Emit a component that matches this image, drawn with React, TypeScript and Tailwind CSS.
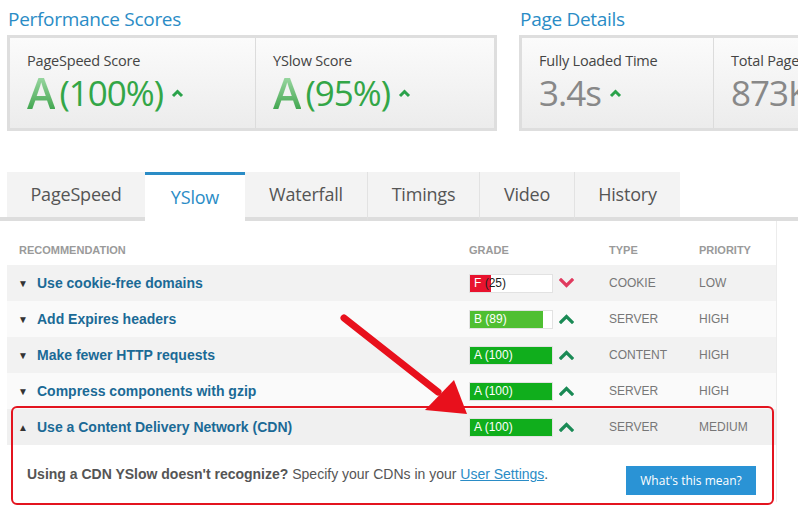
import React from "react";

const rows = [
  { name: "Use cookie-free domains", grade: "F", score: 25, type: "COOKIE", priority: "LOW", bg: "bg-[#f2f2f2]", open: false },
  { name: "Add Expires headers", grade: "B", score: 89, type: "SERVER", priority: "HIGH", bg: "bg-[#fafafa]", open: false },
  { name: "Make fewer HTTP requests", grade: "A", score: 100, type: "CONTENT", priority: "HIGH", bg: "bg-[#f2f2f2]", open: false },
  { name: "Compress components with gzip", grade: "A", score: 100, type: "SERVER", priority: "HIGH", bg: "bg-[#fafafa]", open: false },
  { name: "Use a Content Delivery Network (CDN)", grade: "A", score: 100, type: "SERVER", priority: "MEDIUM", bg: "bg-[#f0f0f0]", open: true },
];

const tabs = ["PageSpeed", "YSlow", "Waterfall", "Timings", "Video", "History"];
const tabWidths = ["w-[138px]", "w-[100px]", "w-[122px]", "w-[112px]", "w-[95px]", "w-[106px]"];

function Caret({ down = false, color }: { down?: boolean; color: string }) {
  return (
    <svg width="15" height="10" viewBox="0 0 15 10">
      <polyline
        points={down ? "2,2 7.5,7.5 13,2" : "2,8 7.5,2.5 13,8"}
        fill="none"
        stroke={color}
        strokeWidth="3.2"
        strokeLinecap="square"
      />
    </svg>
  );
}

function SmallCaret() {
  return (
    <svg width="13" height="9" viewBox="0 0 13 9" className="ml-[8px]">
      <polyline points="2,7 6.5,2.5 11,7" fill="none" stroke="#2aa24a" strokeWidth="3" />
    </svg>
  );
}

function GradeBar({ grade, score }: { grade: string; score: number }) {
  const fill = grade === "F" ? "#e8122e" : grade === "B" ? "#4fbf32" : "#10ae1c";
  return (
    <div className="relative h-[19px] w-[84px] border border-[#e2e2e2] bg-white">
      <div className="absolute left-0 top-0 h-full" style={{ width: `${score}%`, background: fill }} />
      <div className="relative pl-[4px] text-[12px] leading-[17px]">
        <span className="text-white">{grade}</span>{" "}
        <span className={grade === "F" ? "text-[#222]" : "text-white"}>({score})</span>
      </div>
    </div>
  );
}

function ScoreCell({ label, children, divider }: { label: string; children: React.ReactNode; divider?: boolean }) {
  return (
    <div className={`flex flex-col pl-[17px] pt-[12px] ${divider ? "border-l border-[#dcdcdc]" : ""}`}>
      <div className="text-[14.5px] leading-[22px] tracking-[-0.2px] text-[#444]">{label}</div>
      <div className="flex h-[42px] items-center">{children}</div>
    </div>
  );
}

export default function App() {
  return (
    <div className="relative h-[516px] w-[798px] overflow-hidden bg-white" style={{ fontFamily: "'Open Sans', sans-serif" }}>
      {/* top cards */}
      <div className="flex gap-[22px] pl-[7px] pt-[6px]">
        <div className="w-[490px] shrink-0">
          <h2 className="pl-[1px] text-[19px] leading-[26px] tracking-[-0.3px] text-[#2a8cc6]">Performance Scores</h2>
          <div className="mt-[3px] grid h-[96px] grid-cols-[245px_1fr] border-[3px] border-[#dedede] bg-gradient-to-b from-[#fbfbfb] to-[#ececec]">
            <ScoreCell label="PageSpeed Score">
              <span className="bg-gradient-to-b from-[#a6dfae] to-[#2f9f43] bg-clip-text text-[43px] leading-[42px] font-semibold text-transparent">A</span>
              <span className="ml-[4px] text-[35px] leading-[42px] tracking-[-1px] text-[#33a647]">(100%)</span>
              <SmallCaret />
            </ScoreCell>
            <ScoreCell label="YSlow Score" divider>
              <span className="bg-gradient-to-b from-[#a6dfae] to-[#2f9f43] bg-clip-text text-[43px] leading-[42px] font-semibold text-transparent">A</span>
              <span className="ml-[4px] text-[35px] leading-[42px] tracking-[-1px] text-[#33a647]">(95%)</span>
              <SmallCaret />
            </ScoreCell>
          </div>
        </div>
        <div className="w-[400px] shrink-0">
          <h2 className="pl-[1px] text-[19px] leading-[26px] tracking-[-0.3px] text-[#2a8cc6]">Page Details</h2>
          <div className="mt-[3px] grid h-[96px] grid-cols-[191px_1fr] border-[3px] border-[#dedede] bg-gradient-to-b from-[#fbfbfb] to-[#ececec]">
            <ScoreCell label="Fully Loaded Time">
              <span className="text-[35px] leading-[42px] tracking-[-1px] text-[#888]">3.4s</span>
              <SmallCaret />
            </ScoreCell>
            <ScoreCell label="Total Page Size" divider>
              <span className="text-[35px] leading-[42px] tracking-[-1px] text-[#888]">873KB</span>
            </ScoreCell>
          </div>
        </div>
      </div>

      {/* tabs */}
      <div className="mt-[41px] flex border-b-[4px] border-[#dddddd] pl-[7px]">
        {tabs.map((t, i) => (
          <div
            key={t}
            className={`${tabWidths[i]} -mb-[4px] flex h-[49px] items-center justify-center text-[18px] tracking-[-0.2px] ${
              t === "YSlow"
                ? "border-t-[3px] border-[#2a8cc6] bg-white pb-[1px] text-[#2a8cc6]"
                : `bg-[#f3f3f3] text-[#555] border-b-[4px] border-[#dddddd] ${i > 0 && tabs[i - 1] !== "YSlow" ? "border-l border-l-[#e2e2e2]" : ""}`
            }`}
          >
            {t}
          </div>
        ))}
      </div>

      {/* table */}
      <div className="ml-[7px] w-[770px] border-r border-[#ececec] pt-[15px]" style={{ fontFamily: "'Liberation Sans', Arial, sans-serif" }}>
        <div className="grid h-[29px] grid-cols-[462px_140px_90px_1fr] items-center text-[11px] font-bold text-[#9a9a9a]">
          <div className="pl-[12px]">RECOMMENDATION</div>
          <div>GRADE</div>
          <div>TYPE</div>
          <div>PRIORITY</div>
        </div>
        {rows.map((r) => (
          <div key={r.name}>
            <div className={`grid h-[36px] grid-cols-[462px_140px_90px_1fr] items-center ${r.bg}`}>
              <div className="flex items-center pl-[11px]">
                <span className="w-[19px] text-[10px] text-[#333]">{r.open ? "▲" : "▼"}</span>
                <span className="text-[14px] font-bold text-[#1b6a96]">{r.name}</span>
              </div>
              <div className="flex items-center gap-[6px]">
                <GradeBar grade={r.grade} score={r.score} />
                <Caret down={r.grade === "F"} color={r.grade === "F" ? "#e03a5e" : "#1a8a55"} />
              </div>
              <div className="text-[12px] text-[#777]">{r.type}</div>
              <div className="text-[12px] text-[#777]">{r.priority}</div>
            </div>
            {r.open && (
              <div className="flex h-[57px] justify-between bg-white pl-[20px] pr-[20px]">
                <div className="pt-[19px] text-[14px] leading-[20px] text-[#555]">
                  <span className="font-bold">Using a CDN YSlow doesn't recognize?</span> Specify your CDNs in your{" "}
                  <a className="text-[#2a8cc6] underline">User Settings</a>.
                </div>
                <button className="mt-[21px] h-[29px] w-[130px] bg-[#2a93d5] text-[12px] text-white" style={{ fontFamily: "'Open Sans', sans-serif" }}>
                  What's this mean?
                </button>
              </div>
            )}
          </div>
        ))}
      </div>

      {/* red highlight box */}
      <div className="absolute left-[11px] top-[406px] h-[99px] w-[763px] rounded-[6px] border-2 border-[#e3141f]" />

      {/* red arrow */}
      <svg className="absolute left-0 top-0" width="798" height="516" viewBox="0 0 798 516">
        <line x1="344" y1="318" x2="438" y2="392" stroke="#e8101c" strokeWidth="7" strokeLinecap="round" />
        <polygon points="454,380 425,410 467,414" fill="#e8101c" />
      </svg>
    </div>
  );
}
